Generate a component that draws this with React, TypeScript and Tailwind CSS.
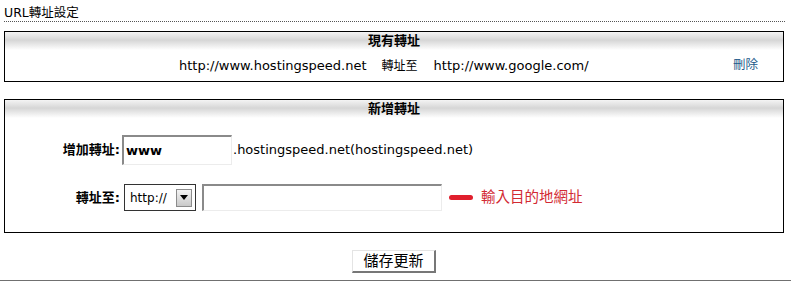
const font = "font-['DejaVu_Sans','Noto_Sans_CJK_TC',sans-serif]"

function BoxHeader({ title }: { title: string }) {
  return (
    <div className="h-[18px] bg-[linear-gradient(to_bottom,#f4f4f4_0%,#d6d6d6_45%,#ffffff_100%)] text-center text-[13px] font-bold leading-[18px] text-black">
      {title}
    </div>
  )
}

function InsetInput({ className, value }: { className: string; value?: string }) {
  return (
    <div
      className={
        "flex items-center border-t-2 border-l-2 border-r border-b border-t-[#8a8a8a] border-l-[#8a8a8a] border-r-[#ececec] border-b-[#ececec] bg-white pl-[2px] " +
        className
      }
    >
      {value && <span className="text-[13px] font-bold text-black">{value}</span>}
    </div>
  )
}

export default function App() {
  return (
    <div className={`${font} w-[791px] bg-white text-black`}>
      <div className="ml-[4px] w-[781px]">
        <div className="border-b border-dotted border-[#555] pt-[5px] text-[12.5px] leading-[16px]">URL轉址設定</div>

        {/* existing redirects */}
        <div className="mt-[9px] w-[780px] border border-black">
          <BoxHeader title="現有轉址" />
          <div className="flex h-[31px] items-center text-[13px]">
            <span className="ml-[174px]">http://www.hostingspeed.net</span>
            <span className="ml-[15px] text-[12px]">轉址至</span>
            <span className="ml-[16px]">http://www.google.com/</span>
            <span className="ml-auto mr-[25px] text-[12.5px] text-[#1b5a8a]">刪除</span>
          </div>
        </div>

        {/* add redirect */}
        <div className="mt-[17px] w-[780px] border border-black pb-[21px]">
          <BoxHeader title="新增轉址" />
          <div className="mt-[17px] flex h-[30px] items-center">
            <span className="w-[115px] text-right text-[13px] font-bold">增加轉址:</span>
            <InsetInput className="ml-[2px] h-[30px] w-[110px]" value="www" />
            <span className="ml-[1px] text-[13px]">.hostingspeed.net(hostingspeed.net)</span>
          </div>
          <div className="mt-[19px] flex h-[27px] items-center">
            <span className="w-[115px] text-right text-[13px] font-bold">轉址至:</span>
            <div className="ml-[4px] flex h-[27px] w-[72px] items-center border border-[#333] bg-white">
              <span className="pl-[5px] text-[12px]">http://</span>
              <div className="ml-auto mr-[3px] flex h-[18px] w-[16px] items-center justify-center border border-[#8c8c8c] bg-[linear-gradient(to_bottom,#f4f4f4,#c9c9c9)]">
                <svg width="8" height="5" viewBox="0 0 8 5">
                  <path d="M0 0h8L4 5z" fill="#000" />
                </svg>
              </div>
            </div>
            <InsetInput className="ml-[6px] h-[27px] w-[240px]" />
            <span className="ml-[7px] h-[5px] w-[24px] rounded-full bg-[#e01f2d]" />
            <span className="ml-[8px] text-[14.5px] text-[#d22a33]">輸入目的地網址</span>
          </div>
        </div>

        <div className="mt-[17px] flex justify-center pr-[1px]">
          <button className="h-[23px] w-[84px] border-t border-l border-r-2 border-b-2 border-t-[#e4e4e4] border-l-[#e4e4e4] border-r-[#777] border-b-[#777] bg-white text-[15px] leading-[19px] text-black">
            儲存更新
          </button>
        </div>
      </div>
      <div className="mt-[7px] h-px w-[791px] bg-[#707070]" />
    </div>
  )
}
